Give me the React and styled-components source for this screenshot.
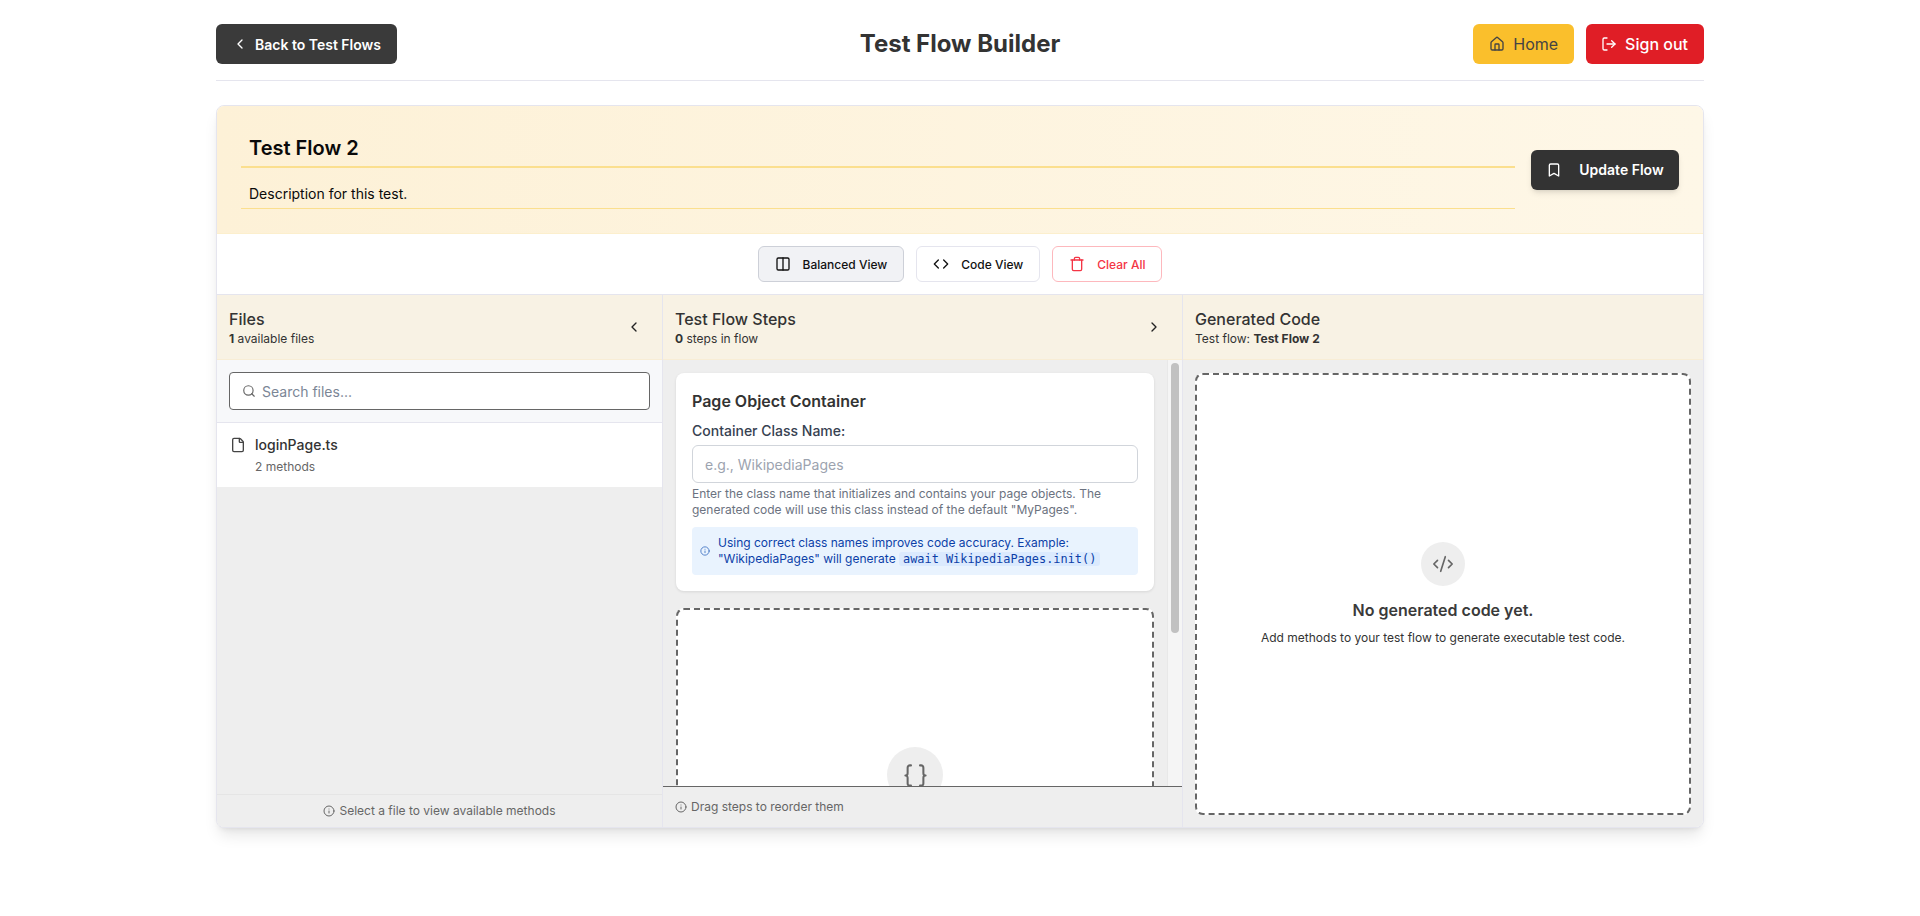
import React from "react";
import styled, { createGlobalStyle } from "styled-components";
import { ChevronLeft, ChevronRight, House, LogOut, Bookmark, Columns2, Code, Trash, Search, File, Info, Braces, CodeXml } from "lucide-react";

const Global = createGlobalStyle`
  html, body { margin: 0; padding: 0; background: #fff; }
  body { font-family: Inter, "Liberation Sans", sans-serif; color: #333; }
  * { box-sizing: border-box; }
`;

const Page = styled.div`
  width: 1488px;
  height: 916px;
  margin: 0 auto;
  padding-top: 24px;
  display: flex;
  flex-direction: column;
`;
const TopBar = styled.header`
  height: 57px;
  padding-bottom: 16px;
  border-bottom: 1px solid #e5e5ee;
  display: flex;
  align-items: center;
  justify-content: space-between;
  position: relative;
`;
const PageTitle = styled.h1`
  position: absolute;
  left: 0;
  right: 0;
  top: 4px;
  margin: 0;
  text-align: center;
  font-size: 24px;
  line-height: 32px;
  font-weight: 700;
  color: #333;
  pointer-events: none;
`;
const TopButton = styled.button`
  height: 40px;
  border: none;
  border-radius: 6px;
  display: inline-flex;
  align-items: center;
  font-family: inherit;
  background: ${(p) => p.$bg};
  color: ${(p) => p.$fg};
  font-size: ${(p) => p.$size || 16}px;
  font-weight: ${(p) => p.$weight || 400};
  padding: 0 16px 0 ${(p) => p.$pl || 16}px;
  gap: ${(p) => p.$gap || 8}px;
`;
const TopRight = styled.div`
  display: flex;
  gap: 12px;
`;
const Card = styled.main`
  margin-top: 24px;
  height: 723px;
  border: 1px solid #e5e5ee;
  border-radius: 8px;
  box-shadow: 0 10px 15px -3px rgba(0, 0, 0, 0.1), 0 4px 6px -4px rgba(0, 0, 0, 0.1);
  overflow: hidden;
  display: flex;
  flex-direction: column;
  background: #fff;
`;
const Banner = styled.section`
  height: 128px;
  flex: none;
  background: linear-gradient(to right, #fdf1d7, #fef7e7);
  border-bottom: 1px solid #fcefcd;
  display: flex;
  align-items: center;
  padding: 0 24px;
  gap: 16px;
`;
const BannerFields = styled.div`
  flex: 1;
  margin-bottom: 2px;
`;
const NameField = styled.div`
  height: 40px;
  padding: 6px 8px 0;
  border-bottom: 2px solid #fbdf8e;
  font-size: 20px;
  line-height: 28px;
  font-weight: 600;
  color: #0a0a0a;
`;
const DescField = styled.div`
  margin-top: 8px;
  height: 33px;
  padding: 8px 8px 0;
  border-bottom: 1px solid #fbdf8e;
  font-size: 14px;
  line-height: 20px;
  color: #0a0a0a;
`;
const UpdateButton = styled.button`
  width: 148px;
  height: 40px;
  border: none;
  border-radius: 6px;
  background: #333;
  color: #fff;
  font-family: inherit;
  font-size: 14px;
  font-weight: 600;
  display: inline-flex;
  align-items: center;
  justify-content: center;
  gap: 17px;
  box-shadow: 0 4px 6px -1px rgba(0, 0, 0, 0.1), 0 2px 4px -2px rgba(0, 0, 0, 0.1);
`;
const Toolbar = styled.div`
  height: 61px;
  flex: none;
  display: flex;
  align-items: center;
  justify-content: center;
  gap: 12px;
  border-bottom: 1px solid #e5e5ee;
`;
const ViewButton = styled.button`
  height: 36px;
  padding: 0 16px;
  border-radius: 6px;
  border: 1px solid ${(p) => (p.$danger ? "#fdb8bd" : p.$active ? "#cdd0d8" : "#e5e5ee")};
  background: ${(p) => (p.$active ? "#f1f2f5" : "#fff")};
  color: ${(p) => (p.$danger ? "#f43545" : "#111")};
  font-family: inherit;
  font-size: 12px;
  font-weight: 500;
  display: inline-flex;
  align-items: center;
  gap: 12px;
`;
const Columns = styled.div`
  flex: 1;
  min-height: 0;
  display: grid;
  grid-template-columns: 446px 520px 1fr;
`;
const Column = styled.section`
  min-height: 0;
  display: flex;
  flex-direction: column;
  background: #eee;
  border-right: ${(p) => (p.$last ? "none" : "1px solid #e5e5ee")};
  position: relative;
`;
const ColumnHead = styled.div`
  height: 65px;
  flex: none;
  background: #f8f2e4;
  border-bottom: 1px solid #f8edd5;
  padding: 12px 12px 0;
  display: flex;
  justify-content: space-between;
`;
const HeadTitle = styled.h2`
  margin: 0;
  font-size: 16px;
  line-height: 24px;
  font-weight: 500;
  color: #333;
`;
const HeadSub = styled.div`
  font-size: 12px;
  line-height: 16px;
  color: #333;
  b { font-weight: 700; }
`;
const Collapse = styled.span`
  display: flex;
  margin: 12px 8px 0 0;
  color: #222;
`;
const SearchArea = styled.div`
  flex: none;
  height: 63px;
  padding: 12px;
  background: #f7f8fa;
  border-bottom: 1px solid #e5e5ee;
`;
const SearchBox = styled.div`
  height: 38px;
  border: 1px solid #666;
  border-radius: 4px;
  background: #fff;
  display: flex;
  align-items: center;
  gap: 6px;
  padding: 0 12px;
  color: #7b8696;
  font-size: 14px;
  svg { color: #666; }
`;
const FileRow = styled.div`
  flex: none;
  height: 64px;
  background: #fff;
  padding: 12px 13px;
  display: flex;
  gap: 9px;
`;
const FileIcon = styled.span`
  display: flex;
  padding-top: 2px;
  color: #444;
`;
const FileName = styled.div`
  font-size: 14px;
  line-height: 20px;
  font-weight: 500;
  color: #333;
`;
const FileMeta = styled.div`
  margin-top: 4px;
  font-size: 12px;
  line-height: 16px;
  color: #666;
`;
const Spacer = styled.div`
  flex: 1;
`;
const FootNote = styled.div`
  flex: none;
  height: ${(p) => p.$h}px;
  border-top: 1px solid ${(p) => p.$line};
  background: #eee;
  display: flex;
  align-items: ${(p) => (p.$center ? "center" : "flex-start")};
  justify-content: ${(p) => (p.$center ? "center" : "flex-start")};
  padding: ${(p) => (p.$center ? "0" : "12px 12px 0")};
  gap: 4px;
  font-size: 12px;
  line-height: 16px;
  color: #666;
  svg { flex: none; margin-top: ${(p) => (p.$center ? "0" : "2px")}; }
`;
const StepsScroll = styled.div`
  flex: 1;
  min-height: 0;
  overflow: hidden;
  padding: 13px 28px 0 13px;
  position: relative;
`;
const ScrollTrack = styled.div`
  position: absolute;
  top: 0;
  right: 0;
  bottom: 0;
  width: 15px;
  background: #f5f5f5;
  border-left: 1px solid #e8e8e8;
  &::after {
    content: "";
    position: absolute;
    left: 3px;
    top: 3px;
    width: 8px;
    height: 270px;
    border-radius: 4px;
    background: #c1c1c1;
  }
`;
const ContainerCard = styled.div`
  height: 218px;
  background: #fff;
  border-radius: 8px;
  box-shadow: 0 1px 3px rgba(0, 0, 0, 0.1);
  padding: 16px;
`;
const CardTitle = styled.h3`
  margin: 0;
  font-size: 16px;
  line-height: 24px;
  font-weight: 600;
  color: #333;
`;
const FieldLabel = styled.label`
  display: block;
  margin-top: 8px;
  font-size: 14px;
  line-height: 20px;
  font-weight: 500;
  color: #374151;
`;
const ClassInput = styled.div`
  margin-top: 4px;
  height: 38px;
  border: 1px solid #d1d5db;
  border-radius: 6px;
  padding: 0 12px;
  display: flex;
  align-items: center;
  font-size: 14px;
  color: #9ca3af;
`;
const Hint = styled.p`
  margin: 3px 0 0;
  font-size: 12px;
  line-height: 16px;
  color: #6b7280;
`;
const Notice = styled.div`
  margin-top: 9px;
  height: 48px;
  background: #e9f3fe;
  border-radius: 4px;
  display: flex;
  align-items: center;
  gap: 8px;
  padding: 0 8px;
  font-size: 12px;
  line-height: 16px;
  color: #0c3fa8;
  svg { flex: none; color: #3b6fc0; }
`;
const InlineCode = styled.code`
  font-family: "DejaVu Sans Mono", "Liberation Mono", monospace;
  font-size: 11.9px;
  background: #dbeafe;
  border-radius: 3px;
  padding: 0 4px;
`;
const DropZone = styled.div`
  background: #fff;
  border: 2px dashed #666;
  border-radius: 8px;
  display: flex;
  flex-direction: column;
  align-items: center;
`;
const StepsDrop = styled(DropZone)`
  margin-top: 17px;
  height: 400px;
  padding-top: 137px;
`;
const CodeBody = styled.div`
  flex: 1;
  min-height: 0;
  padding: 13px 12px 12px;
`;
const CodeDrop = styled(DropZone)`
  height: 100%;
  padding-top: 167px;
`;
const IconCircle = styled.div`
  width: ${(p) => p.$size}px;
  height: ${(p) => p.$size}px;
  border-radius: 50%;
  background: #eee;
  color: #666;
  display: flex;
  align-items: center;
  justify-content: center;
  flex: none;
`;
const EmptyTitle = styled.div`
  margin-top: 12px;
  font-size: 16px;
  line-height: 24px;
  font-weight: 600;
  color: #3a3a3a;
`;
const EmptyText = styled.div`
  margin-top: 8px;
  font-size: 12px;
  line-height: 16px;
  color: #333;
`;

export default function App() {
  return (
    <Page>
      <Global />
      <TopBar>
        <TopButton $bg="#3a3a3a" $fg="#fff" $size={14} $weight={600} $gap={7}>
          <ChevronLeft size={16} />
          Back to Test Flows
        </TopButton>
        <PageTitle>Test Flow Builder</PageTitle>
        <TopRight>
          <TopButton $bg="#fabf2c" $fg="#444">
            <House size={16} />
            Home
          </TopButton>
          <TopButton $bg="#e01e26" $fg="#fff" $weight={500} $pl={15} $gap={8}>
            <LogOut size={16} />
            Sign out
          </TopButton>
        </TopRight>
      </TopBar>
      <Card>
        <Banner>
          <BannerFields>
            <NameField>Test Flow 2</NameField>
            <DescField>Description for this test.</DescField>
          </BannerFields>
          <UpdateButton>
            <Bookmark size={16} />
            Update Flow
          </UpdateButton>
        </Banner>
        <Toolbar>
          <ViewButton $active>
            <Columns2 size={16} />
            Balanced View
          </ViewButton>
          <ViewButton>
            <Code size={16} />
            Code View
          </ViewButton>
          <ViewButton $danger>
            <Trash size={16} />
            Clear All
          </ViewButton>
        </Toolbar>
        <Columns>
          <Column>
            <ColumnHead>
              <div>
                <HeadTitle>Files</HeadTitle>
                <HeadSub><b>1</b> available files</HeadSub>
              </div>
              <Collapse><ChevronLeft size={16} /></Collapse>
            </ColumnHead>
            <SearchArea>
              <SearchBox>
                <Search size={14} />
                Search files...
              </SearchBox>
            </SearchArea>
            <FileRow>
              <FileIcon><File size={16} /></FileIcon>
              <div>
                <FileName>loginPage.ts</FileName>
                <FileMeta>2 methods</FileMeta>
              </div>
            </FileRow>
            <Spacer />
            <FootNote $h={33} $line="#e5e5e5" $center>
              <Info size={12} />
              Select a file to view available methods
            </FootNote>
          </Column>
          <Column>
            <ColumnHead>
              <div>
                <HeadTitle>Test Flow Steps</HeadTitle>
                <HeadSub><b>0</b> steps in flow</HeadSub>
              </div>
              <Collapse><ChevronRight size={16} /></Collapse>
            </ColumnHead>
            <StepsScroll>
              <ContainerCard>
                <CardTitle>Page Object Container</CardTitle>
                <FieldLabel>Container Class Name:</FieldLabel>
                <ClassInput>e.g., WikipediaPages</ClassInput>
                <Hint>Enter the class name that initializes and contains your page objects. The generated code will use this class instead of the default "MyPages".</Hint>
                <Notice>
                  <Info size={10} />
                  <span>Using correct class names improves code accuracy. Example: "WikipediaPages" will generate <InlineCode>await WikipediaPages.init()</InlineCode></span>
                </Notice>
              </ContainerCard>
              <StepsDrop>
                <IconCircle $size={56}><Braces size={27} strokeWidth={1.8} /></IconCircle>
              </StepsDrop>
              <ScrollTrack />
            </StepsScroll>
            <FootNote $h={41} $line="#666">
              <Info size={12} />
              Drag steps to reorder them
            </FootNote>
          </Column>
          <Column $last>
            <ColumnHead>
              <div>
                <HeadTitle>Generated Code</HeadTitle>
                <HeadSub>Test flow: <b>Test Flow 2</b></HeadSub>
              </div>
            </ColumnHead>
            <CodeBody>
              <CodeDrop>
                <IconCircle $size={44}><CodeXml size={22} strokeWidth={1.8} /></IconCircle>
                <EmptyTitle>No generated code yet.</EmptyTitle>
                <EmptyText>Add methods to your test flow to generate executable test code.</EmptyText>
              </CodeDrop>
            </CodeBody>
          </Column>
        </Columns>
      </Card>
    </Page>
  );
}
